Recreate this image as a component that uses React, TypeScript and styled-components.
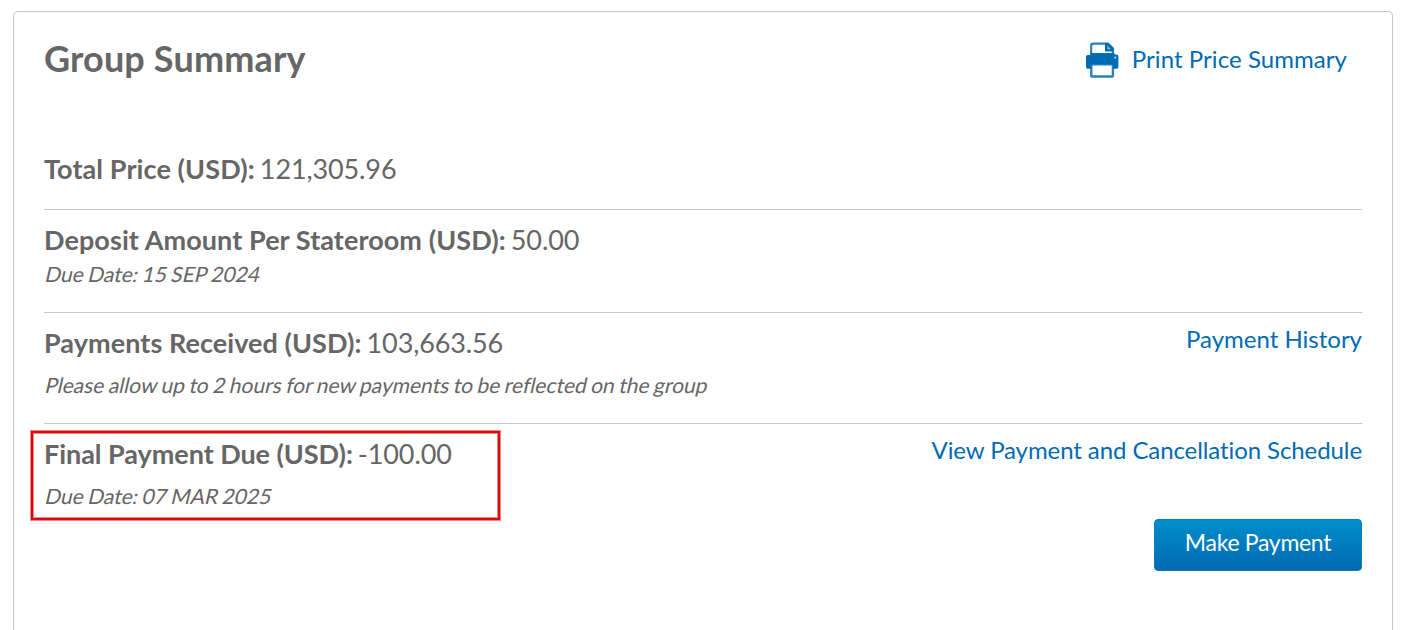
import React from "react";
import styled, { createGlobalStyle } from "styled-components";

const color = {
  text: "#666666",
  link: "#006bb2",
  line: "#c5c6c6",
  alert: "#d90b0f",
  alertSoft: "rgba(217, 11, 15, 0.5)"
};

interface RowStyle {
  height: number;
  noBorder?: boolean;
}

export default function App() {
  return (
    <>
      <GlobalStyle />
      <Panel>
        <Header>
          <Title>Group Summary</Title>
          <PrintLink href="#">
            <PrinterIcon />
            Print Price Summary
          </PrintLink>
        </Header>
        <Row height={69}>
          <Price>
            <Label tracking={0.1}>Total Price (USD):</Label>
            <Value>121,305.96</Value>
          </Price>
        </Row>
        <Row height={102}>
          <div>
            <Price>
              <Label tracking={0.08}>Deposit Amount Per Stateroom (USD):</Label>
              <Value>50.00</Value>
            </Price>
            <Note gap={5}>Due Date: 15 SEP 2024</Note>
          </div>
        </Row>
        <Row height={110}>
          <div>
            <Price>
              <Label tracking={0.06}>Payments Received (USD):</Label>
              <Value>103,663.56</Value>
            </Price>
            <Note gap={13}>
              Please allow up to 2 hours for new payments to be reflected on the
              group
            </Note>
          </div>
          <Link href="#">Payment History</Link>
        </Row>
        <Row height={206} noBorder>
          <Due>
            <Price>
              <Label tracking={-0.05}>Final Payment Due (USD):</Label>
              <Value>-100.00</Value>
            </Price>
            <Note gap={13}>Due Date: 07 MAR 2025</Note>
            <Highlight />
          </Due>
          <Actions>
            <Link href="#" tracking={-0.09}>
              View Payment and Cancellation Schedule
            </Link>
            <PayButton>Make Payment</PayButton>
          </Actions>
        </Row>
      </Panel>
    </>
  );
}

function PrinterIcon() {
  return (
    <svg width="33" height="36" viewBox="0 0 33 36">
      <path
        d="M5.3 14V3.2a1.6 1.6 0 0 1 1.6-1.6h15l5 5V14"
        fill="#fff"
        stroke={color.link}
        strokeWidth="2.4"
        strokeOpacity="0.85"
      />
      <path d="M19 1v8.4h8.4V6.2L22.2 1z" fill={color.link} />
      <path d="M21.4 3.6v3.6h3.4z" fill="#8fc0de" />
      <path
        d="M0 14.6q0-1.6 1.6-1.6H4v-2h24.4v1.6h2q2 0 2 2V25q0 1.8-1.8 1.8H1.6Q0 26.8 0 25z"
        fill={color.link}
      />
      <path d="M6.5 4h11.3v7H6.5z" fill="#fff" />
      <circle cx="29.2" cy="15.6" r="1.1" fill="#b5d6ea" />
      <rect
        x="5.3"
        y="22.3"
        width="21.6"
        height="12.2"
        rx="0.6"
        fill="#fff"
        stroke={color.link}
        strokeWidth="2.4"
        strokeOpacity="0.85"
      />
    </svg>
  );
}

const GlobalStyle = createGlobalStyle`
  * {
    box-sizing: border-box;
  }

  body {
    margin: 0;
    background-color: #fff;
    color: ${color.text};
    font-family: Lato, "Liberation Sans", sans-serif;
    font-variant-ligatures: none;
  }
`;

const Panel = styled.section`
  width: 1380px;
  height: 619px;
  margin: 11px 0 0 13px;
  padding: 0 30px;
  border: 1px solid ${color.line};
  border-bottom: 0;
  border-radius: 5px 5px 0 0;
  overflow: hidden;
`;

const Header = styled.header`
  display: flex;
  justify-content: space-between;
  align-items: flex-start;
  height: 128px;
  padding: 24px 15px 0 0;
`;

const Title = styled.h1`
  margin: 0;
  font-size: 36px;
  font-weight: 700;
  line-height: 44px;
  letter-spacing: 0.15px;
`;

const Link = styled.a<{ tracking?: number }>`
  margin-top: -2px;
  color: ${color.link};
  font-size: 24px;
  line-height: 28px;
  letter-spacing: ${({ tracking = 0 }) => tracking}px;
  text-decoration: none;
  white-space: nowrap;
`;

const PrintLink = styled(Link)`
  display: flex;
  align-items: flex-start;
  gap: 13px;
  margin-top: 6px;
  line-height: 34px;
  letter-spacing: 0.06px;
`;

const Row = styled.div<RowStyle>`
  display: flex;
  justify-content: space-between;
  align-items: flex-start;
  height: ${({ height }) => height + 1}px;
  padding-top: ${({ height }) => (height === 69 ? 13 : 14)}px;
  border-bottom: ${({ noBorder }) => (noBorder ? 0 : 1)}px solid ${color.line};
`;

const Price = styled.div`
  display: flex;
  gap: 5px;
  font-size: 27px;
  line-height: 32px;
  white-space: nowrap;
`;

const Label = styled.strong<{ tracking: number }>`
  font-weight: 700;
  letter-spacing: ${({ tracking }) => tracking}px;
`;

const Value = styled.span`
  letter-spacing: -0.12px;
`;

/* slanted roman, Lato's own italic has narrower letters */
const Note = styled.div<{ gap: number }>`
  margin-top: ${({ gap }) => gap}px;
  font-size: 21px;
  line-height: 26px;
  word-spacing: -0.95px;
  white-space: nowrap;
  transform: skewX(-13deg);
  transform-origin: 0 21px;
`;

const Due = styled.div`
  position: relative;
`;

/* outline drawn over the amount that is still due */
const Highlight = styled.div`
  position: absolute;
  top: -7px;
  left: -13px;
  width: 469px;
  height: 89px;
  border: 2px solid ${color.alert};
  box-shadow: 0 0 0 1px ${color.alertSoft}, inset 0 0 0 1px ${color.alertSoft};
`;

const Actions = styled.div`
  display: flex;
  flex-direction: column;
  align-items: flex-end;
  gap: 55px;
`;

const PayButton = styled.button`
  width: 208px;
  height: 52px;
  padding: 0 0 7px;
  border: 1px solid #0080c0;
  border-radius: 4px;
  background: linear-gradient(#008ecb, #0069b1);
  color: #fff;
  font-family: inherit;
  font-size: 23px;
  letter-spacing: -0.3px;
  cursor: pointer;
`;
